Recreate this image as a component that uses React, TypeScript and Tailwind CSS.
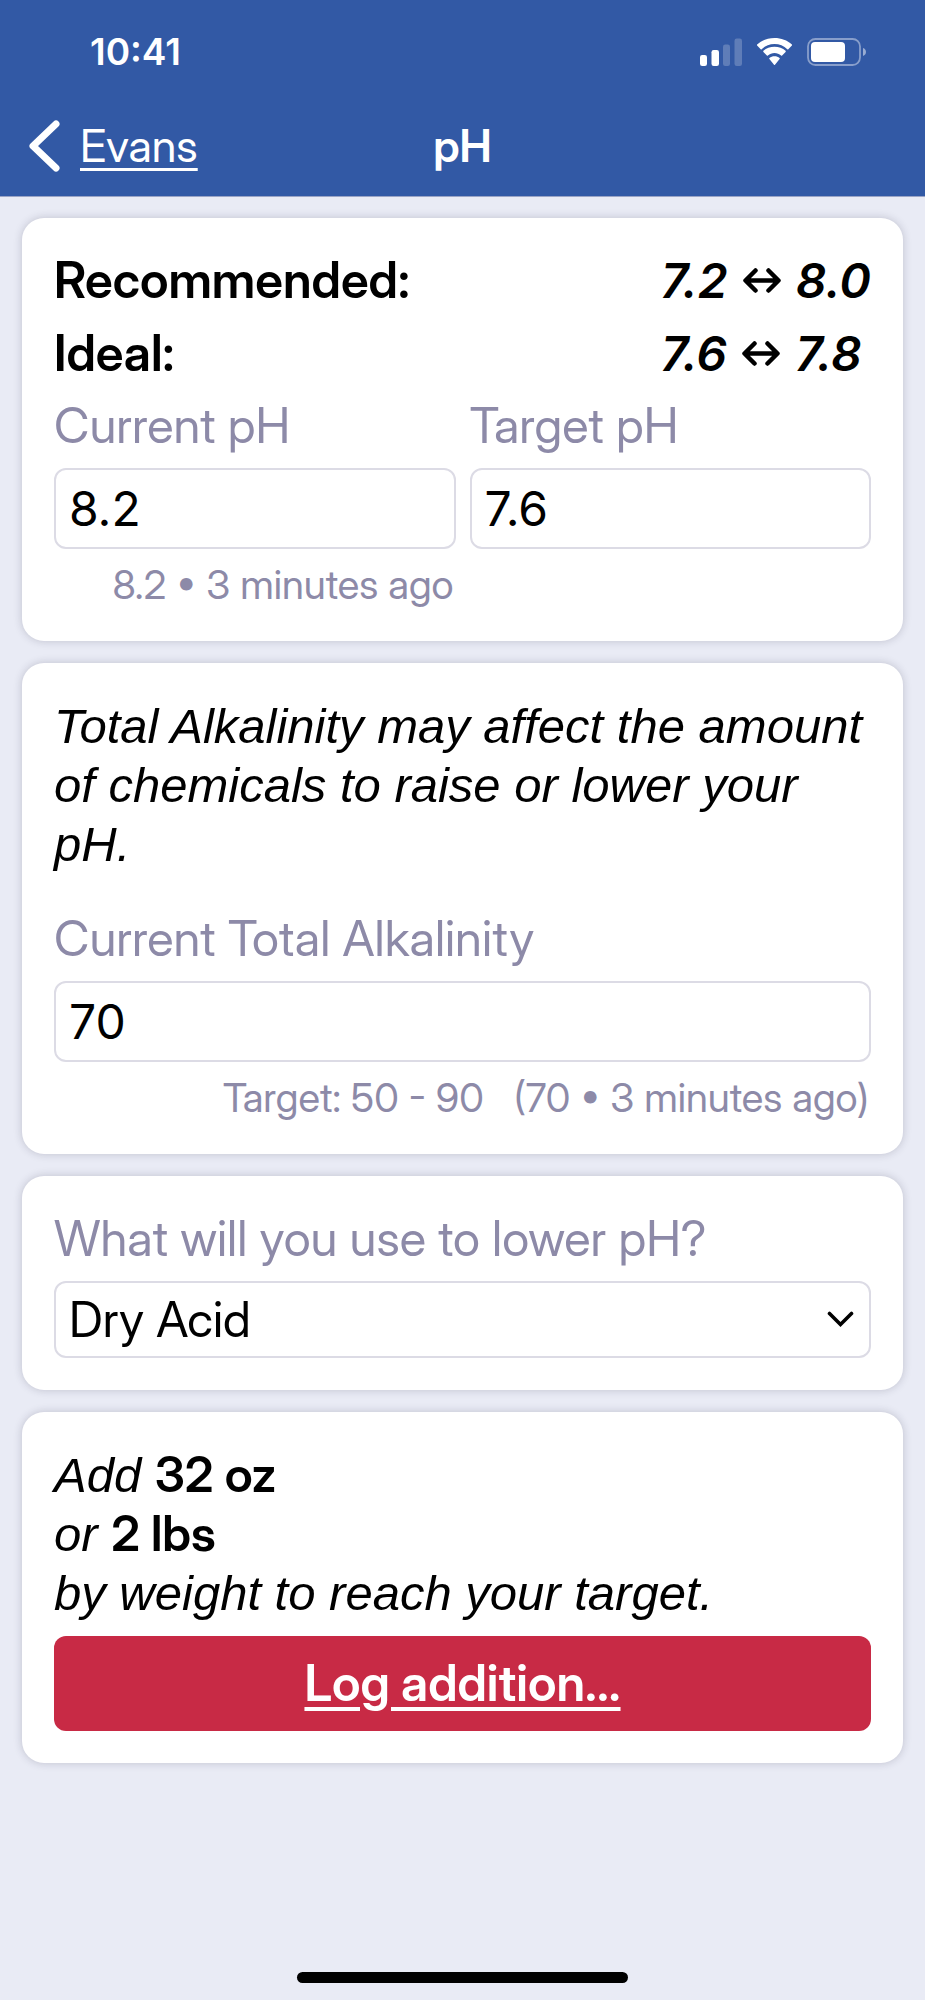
import { useState, type ReactNode } from 'react';

function SignalIcon() {
    return (
        <svg width="42" height="28" viewBox="0 0 42 28" fill="white" aria-hidden="true">
            <rect x="0" y="17" width="7" height="11" rx="2.2" />
            <rect x="11.5" y="12" width="7.5" height="16" rx="2.2" />
            <rect x="23" y="6.5" width="7" height="21.5" rx="2.2" opacity="0.22" />
            <rect x="34.5" y="0.5" width="7.5" height="27.5" rx="2.2" opacity="0.22" />
        </svg>
    );
}

function WifiIcon() {
    return (
        <svg width="37" height="28" viewBox="0 0 37 28" fill="white" aria-hidden="true">
            <path d="M18.5 6.1c4.9 0 9.4 1.9 12.8 5.1.3.3.7.3 1 0l3.6-3.6c.3-.3.3-.8 0-1.1C31.3 2.3 25.2 0 18.5 0S5.7 2.3 1.1 6.5c-.3.3-.3.8 0 1.1l3.6 3.6c.3.3.7.3 1 0 3.4-3.2 7.9-5.1 12.8-5.1z" />
            <path d="M18.5 15c2.5 0 4.8.9 6.6 2.4.3.3.7.3 1 0l3.5-3.5c.3-.3.3-.8 0-1.1-2.9-2.6-6.8-4.1-11.1-4.1s-8.2 1.5-11.1 4.1c-.3.3-.3.8 0 1.1l3.5 3.5c.3.3.7.3 1 0 1.8-1.5 4.1-2.4 6.6-2.4z" />
            <path d="M23.6 20.9c.3-.3.3-.7 0-1-1.4-1.1-3.1-1.7-5.1-1.7s-3.7.6-5.1 1.7c-.3.3-.3.7 0 1l4.6 5.8c.3.3.7.3 1 0z" />
        </svg>
    );
}

function BatteryIcon() {
    return (
        <svg width="59" height="28" viewBox="0 0 59 28" aria-hidden="true">
            <rect x="1" y="1" width="52" height="26" rx="7.5" fill="none" stroke="white" strokeWidth="1.8" opacity="0.42" />
            <rect x="4" y="4" width="34" height="20" rx="4" fill="white" />
            <path d="M56 10c1.8.6 3 2.200 3 4s-1.200 3.400-3 4z" fill="white" opacity="0.5" />
        </svg>
    );
}

function RangeArrow() {
    return (
        <svg className="inline-block align-baseline mx-[3px] mb-[5px]" width="38" height="25" viewBox="0 0 38 25" fill="none" stroke="black" strokeWidth="4.5" strokeLinecap="round" strokeLinejoin="round" role="img" aria-label="to">
            <path d="M3 12.5h32M12.5 2.5 2.5 12.5l10 10M25.5 2.5l10 10-10 10" />
        </svg>
    );
}

function Range({ low, high }: { low: string, high: string }) {
    return (
        <dd className="italic text-[48px] font-['Inter',sans-serif]">
            {low} <RangeArrow /> {high}
        </dd>
    );
}

function Card({ children }: { children: ReactNode }) {
    return (
        <section className="bg-white rounded-[22px] px-8 pb-8 shadow-[0_0_8px_rgba(40,40,70,0.22)]">
            {children}
        </section>
    );
}

const labelClass = 'block mb-[13px] text-[49px] leading-[58px] text-[#8d8aa8]';
const inputClass = "block w-full h-[81px] px-[13px] text-[48px] font-['Inter',sans-serif] bg-white border-2 border-[#dcdbe5] rounded-xl outline-none";
const hintClass = 'mt-3 px-[2px] text-right text-[40px] leading-[48px] text-[#8d8aa8]';
const noteClass = "italic text-[49px] leading-[59px] font-['Liberation_Sans',sans-serif]";
const amountClass = "not-italic font-semibold leading-none font-['Inter_Display','Inter',sans-serif]";

export default function App() {
    const [current, setCurrent] = useState('8.2');
    const [target, setTarget] = useState('7.6');
    const [alkalinity, setAlkalinity] = useState('70');
    const [chemical, setChemical] = useState('Dry Acid');

    return (
        <div className="min-h-screen flex flex-col bg-[#e9ebf5] text-black font-['Inter_Display','Inter',sans-serif]">
            <header className="bg-[#3259a5] text-white border-b border-[#9aa4c6]">
                <div className="h-[104px] pl-[90px] pr-[59px] flex items-center justify-between">
                    <span className="text-[37px] font-semibold font-['Inter',sans-serif]">10:41</span>
                    <div className="flex items-center gap-[14px]">
                        <SignalIcon />
                        <WifiIcon />
                        <BatteryIcon />
                    </div>
                </div>
                <div className="h-[92px] px-7 pb-2 grid grid-cols-[1fr_auto_1fr] items-center text-[45px]">
                    <a href="#evans" className="flex items-center gap-5">
                        <svg width="32" height="52" viewBox="0 0 32 52" fill="none" stroke="white" strokeWidth="7" strokeLinecap="round" strokeLinejoin="round" aria-hidden="true">
                            <path d="M28 4 5 26 28 48" />
                        </svg>
                        <span className="underline decoration-3 underline-offset-[6px]">Evans</span>
                    </a>
                    <h1 className="font-semibold">pH</h1>
                </div>
            </header>

            <main className="flex-1 px-[22px] pt-[21px] flex flex-col gap-[22px]">
                <Card>
                    <dl className="pt-[26px] mb-[7px] grid grid-cols-[1fr_auto] text-[50px] leading-[73px] font-semibold">
                        <dt>Recommended:</dt>
                        <Range low="7.2" high="8.0" />
                        <dt>Ideal:</dt>
                        <Range low="7.6" high="7.8" />
                    </dl>
                    <div className="grid grid-cols-2 gap-x-[14px]">
                        <div>
                            <label htmlFor="current-ph" className={labelClass}>Current pH</label>
                            <input id="current-ph" value={current} onChange={(e) => setCurrent(e.target.value)} className={inputClass} />
                            <p className={hintClass}>8.2 • 3 minutes ago</p>
                        </div>
                        <div>
                            <label htmlFor="target-ph" className={labelClass}>Target pH</label>
                            <input id="target-ph" value={target} onChange={(e) => setTarget(e.target.value)} className={inputClass} />
                        </div>
                    </div>
                </Card>

                <Card>
                    <p className={`pt-[34px] mb-9 ${noteClass}`}>
                        Total Alkalinity may affect the amount of chemicals to raise or lower your pH.
                    </p>
                    <label htmlFor="alkalinity" className={labelClass}>Current Total Alkalinity</label>
                    <input id="alkalinity" value={alkalinity} onChange={(e) => setAlkalinity(e.target.value)} className={inputClass} />
                    <p className={`whitespace-pre ${hintClass}`}>Target: 50 - 90   (70 • 3 minutes ago)</p>
                </Card>

                <Card>
                    <label htmlFor="chemical" className={`pt-[34px] ${labelClass}`}>What will you use to lower pH?</label>
                    <div className="relative">
                        <select
                            id="chemical"
                            value={chemical}
                            onChange={(e) => setChemical(e.target.value)}
                            className="block w-full h-[77px] px-[13px] text-[49px] leading-[58px] appearance-none bg-white border-2 border-[#dcdbe5] rounded-xl outline-none"
                        >
                            <option>Dry Acid</option>
                        </select>
                        <svg className="absolute right-[17px] top-[30px] pointer-events-none" width="27" height="17" viewBox="0 0 27 17" fill="none" stroke="black" strokeWidth="3.6" strokeLinecap="round" strokeLinejoin="miter" aria-hidden="true">
                            <path d="M2.5 2.5 13.5 13.5 24.5 2.5" />
                        </svg>
                    </div>
                </Card>

                <Card>
                    <p className={`pt-[34px] mb-[13px] ${noteClass}`}>
                        Add <strong className={amountClass}>32 oz</strong>
                        <br />
                        or <strong className={amountClass}>2 lbs</strong>
                        <br />
                        by weight to reach your target.
                    </p>
                    <button className="block w-full h-[95px] bg-[#c82a45] rounded-xl text-white text-[50px] font-semibold underline decoration-4 underline-offset-[6px]">
                        Log addition...
                    </button>
                </Card>
            </main>

            <footer className="pb-[17px] flex justify-center">
                <div className="w-[331px] h-[11px] rounded-full bg-black" />
            </footer>
        </div>
    );
}
